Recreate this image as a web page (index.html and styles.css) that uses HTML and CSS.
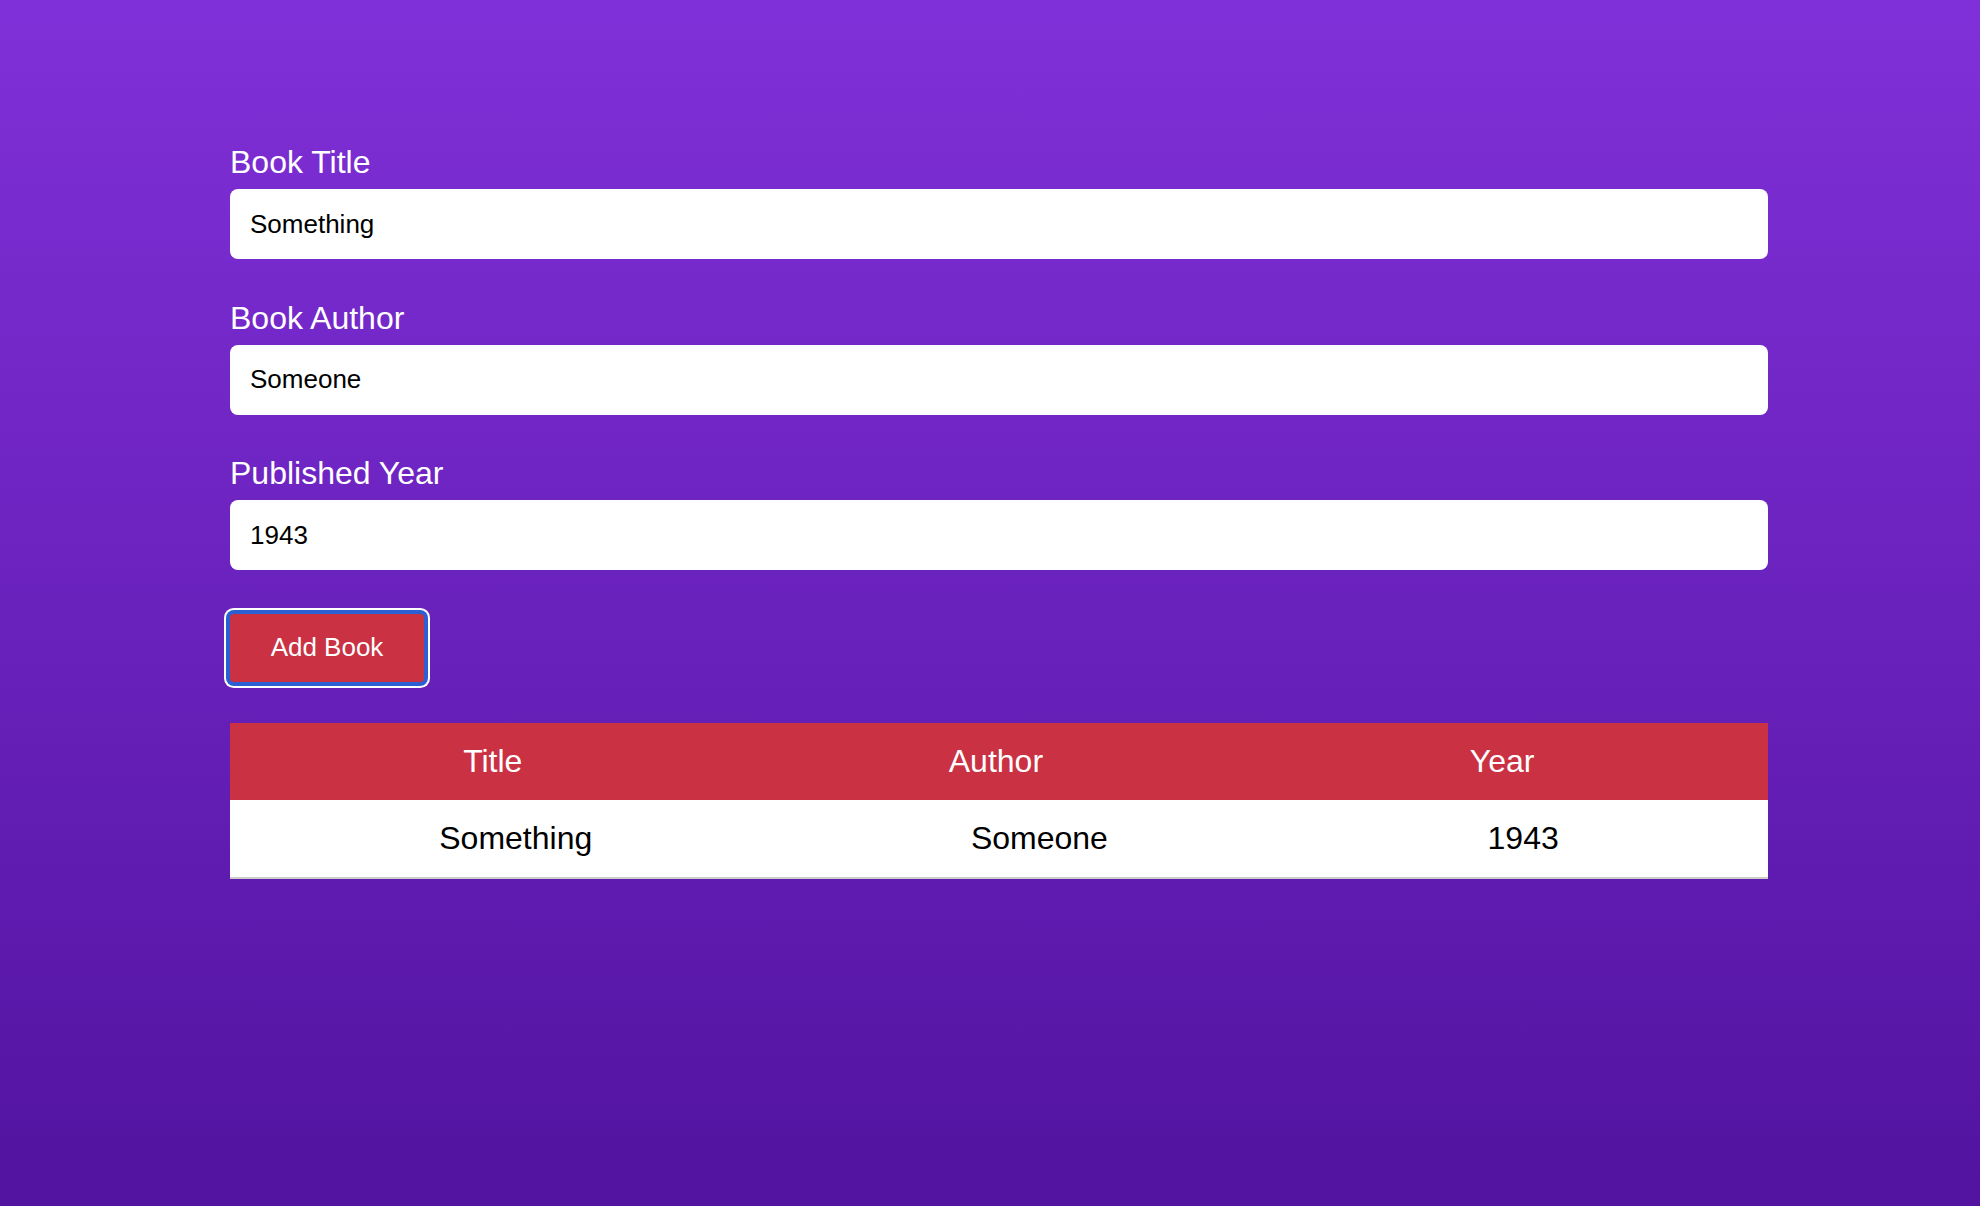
FILE: index.html
```html
<!DOCTYPE html>
<html lang="en">
<head>
<meta charset="utf-8">
<title>Books</title>
<link rel="stylesheet" href="styles.css">
</head>
<body>
<main class="container">
  <form class="book-form">
    <div class="field">
      <label class="field-label" for="title">Book Title</label>
      <input class="field-input" id="title" type="text" value="Something">
    </div>
    <div class="field">
      <label class="field-label" for="author">Book Author</label>
      <input class="field-input" id="author" type="text" value="Someone">
    </div>
    <div class="field">
      <label class="field-label" for="year">Published Year</label>
      <input class="field-input" id="year" type="text" value="1943">
    </div>
    <button class="add-btn" type="button">Add Book</button>
  </form>
  <table class="book-table">
    <colgroup>
      <col class="col-title">
      <col class="col-author">
      <col class="col-year">
    </colgroup>
    <thead>
      <tr><th>Title</th><th>Author</th><th>Year</th></tr>
    </thead>
    <tbody>
      <tr><td class="cell-title">Something</td><td class="cell-author">Someone</td><td class="cell-year">1943</td></tr>
    </tbody>
  </table>
</main>
</body>
</html>
```

FILE: styles.css
```css
html, body {
  margin: 0;
  padding: 0;
}

body {
  min-height: 100vh;
  background: linear-gradient(180deg, #8030d8 0%, #6a22bd 50%, #5213a0 100%);
  font-family: "Liberation Sans", Arial, Helvetica, sans-serif;
}

.container {
  width: 1538px;
  margin-left: 230px;
  padding-top: 144px;
}

.book-form {
  display: flex;
  flex-direction: column;
  gap: 40.5px;
}

.field {
  display: flex;
  flex-direction: column;
}

.field-label {
  color: #ffffff;
  font-size: 32px;
  margin-bottom: 8px;
}

.field-input {
  box-sizing: border-box;
  width: 100%;
  height: 70px;
  padding: 0 20px;
  border: none;
  border-radius: 8px;
  background: #ffffff;
  color: #000000;
  font-family: "Liberation Sans", Arial, Helvetica, sans-serif;
  font-size: 26px;
  outline: none;
}

.add-btn {
  align-self: flex-start;
  box-sizing: border-box;
  width: 194px;
  height: 68px;
  margin-top: 3px;
  padding: 0;
  border: none;
  border-radius: 4px;
  background: #ca3143;
  color: #ffffff;
  font-family: "Liberation Sans", Arial, Helvetica, sans-serif;
  font-size: 26px;
  box-shadow: 0 0 0 4px #2c5fd2, 0 0 0 6px #ffffff;
  cursor: pointer;
}

.book-table {
  width: 1538px;
  margin-top: 41px;
  border-collapse: collapse;
  table-layout: fixed;
}

.col-title { width: 34.17%; }
.col-author { width: 31.26%; }
.col-year { width: 34.57%; }

.book-table th {
  background: #ca3143;
  color: #ffffff;
  font-weight: normal;
  font-size: 32px;
  padding: 20px 0;
  text-align: center;
}

.book-table td {
  background: #ffffff;
  color: #000000;
  font-size: 32px;
  padding: 20px 0;
  text-align: center;
  border-bottom: 2px solid #cccccc;
}

.book-table .cell-title { padding-left: 46px; }
.book-table .cell-author { padding-left: 87px; }
.book-table .cell-year { padding-left: 42px; }
```
